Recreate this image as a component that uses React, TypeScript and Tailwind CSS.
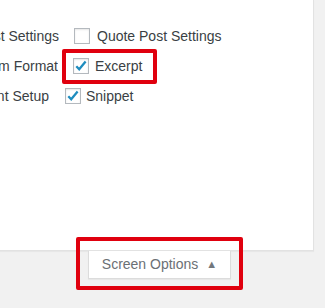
import React from "react";

function Box({ checked }: { checked?: boolean }) {
  return (
    <span className="relative inline-flex h-[16px] w-[16px] shrink-0 items-center justify-center border border-[#b4b9be] bg-white shadow-[inset_0_1px_2px_rgba(0,0,0,0.1)]">
      {checked && (
        <svg width="14" height="14" viewBox="0 0 14 14" className="absolute left-[0px] top-[0px]">
          <polyline points="2.3,7.2 5.2,10.2 11.6,2.6" fill="none" stroke="#1e8cbe" strokeWidth="2.3" strokeLinecap="butt" strokeLinejoin="miter" />
        </svg>
      )}
    </span>
  );
}

function Row({
  lead,
  leadW,
  gap,
  checked,
  label,
  labelGap,
}: {
  lead: string;
  leadW: number;
  gap: number;
  checked?: boolean;
  label: string;
  labelGap: number;
}) {
  return (
    <div className="flex h-[30px] items-center">
      <div
        className="flex justify-end overflow-hidden whitespace-nowrap"
        style={{ width: leadW, marginRight: gap }}
      >
        {lead}
      </div>
      <Box checked={checked} />
      <span className="whitespace-nowrap" style={{ marginLeft: labelGap }}>
        {label}
      </span>
    </div>
  );
}

export default function App() {
  return (
    <div
      className="relative h-[308px] w-[325px] overflow-hidden bg-[#f1f1f1] text-[14px] text-[#3a3f44]"
      style={{ fontFamily: '"Liberation Sans", Arial, sans-serif' }}
    >
      <div className="h-[251px] w-[314px] border-b border-r border-[#e2e2e2] bg-white pt-[21px] shadow-[0_1px_1px_rgba(0,0,0,0.04)]">
        <Row lead="Video Post Settings" leadW={59} gap={15} label="Quote Post Settings" labelGap={7} />
        <Row lead="Custom Format" leadW={58} gap={15} checked label="Excerpt" labelGap={6} />
        <Row lead="Content Setup" leadW={49} gap={16} checked label="Snippet" labelGap={5} />
      </div>
      <div className="flex pl-[88px]">
        <div className="flex h-[28px] w-[143px] items-center justify-center gap-[8px] border-x border-b border-[#dcdcdc] bg-white pb-[1px] text-[14px] text-[#6b7075] shadow-[0_1px_1px_rgba(0,0,0,0.04)]">
          <span>Screen Options</span>
          <span className="text-[11px] leading-none text-[#72777c]">▲</span>
        </div>
      </div>
      <div className="absolute left-[62px] top-[49px] h-[35px] w-[95px] rounded-[2px] border-[4px] border-[#e0000e]" />
      <div className="absolute left-[76px] top-[237px] h-[53px] w-[167px] rounded-[2px] border-[4px] border-[#e0000e]" />
    </div>
  );
}
